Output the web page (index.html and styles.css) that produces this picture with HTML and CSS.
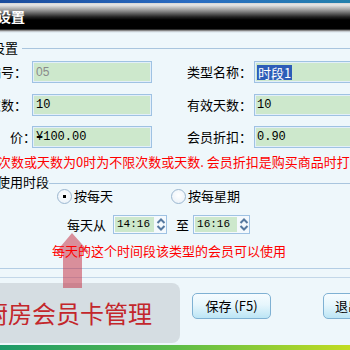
FILE: index.html
```html
<!DOCTYPE html>
<html lang="zh">
<head>
<meta charset="utf-8">
<title>类型设置</title>
<link rel="stylesheet" href="styles.css">
</head>
<body>
<div class="titlebar"><span class="title">类型设置</span></div>

<div class="legend l1"><span class="legend-text">类型设置</span><span class="legend-line"></span></div>

<div class="form">
  <div class="row">
    <div class="lab-l"><span>会员卡编号：</span></div>
    <div class="inp inp-l disabled">05</div>
    <div class="lab-r">类型名称：</div>
    <div class="inp inp-r"><span class="sel">时段1</span></div>
  </div>
  <div class="row">
    <div class="lab-l"><span>可用次数：</span></div>
    <div class="inp inp-l">10</div>
    <div class="lab-r">有效天数：</div>
    <div class="inp inp-r">10</div>
  </div>
  <div class="row">
    <div class="lab-l wide"><span>售　　价：</span></div>
    <div class="inp inp-l pull">¥100.00</div>
    <div class="lab-r">会员折扣：</div>
    <div class="inp inp-r">0.90</div>
  </div>
</div>

<p class="note">次数或天数为0时为不限次数或天数. 会员折扣是购买商品时打折的折扣</p>

<div class="legend l2"><span class="legend-text">使用时段</span><span class="legend-line"></span></div>

<div class="radios">
  <div class="radio"><span class="circle"><span class="dot"></span></span><span>按每天</span></div>
  <div class="radio second"><span class="circle"></span><span>按每星期</span></div>
</div>

<div class="times">
  <span>每天从</span>
  <div class="tbox first">
    <div class="tval">14:16</div>
    <div class="spin"><svg width="10" height="15" viewBox="0 0 10 15"><path d="M1.5 6 L5 2.5 L8.5 6 M1.5 9 L5 12.5 L8.5 9" fill="none" stroke="#56799f" stroke-width="2"/></svg></div>
  </div>
  <span class="to">至</span>
  <div class="tbox second">
    <div class="tval">16:16</div>
    <div class="spin"><svg width="10" height="15" viewBox="0 0 10 15"><path d="M1.5 6 L5 2.5 L8.5 6 M1.5 9 L5 12.5 L8.5 9" fill="none" stroke="#56799f" stroke-width="2"/></svg></div>
  </div>
</div>

<p class="anno">每天的这个时间段该类型的会员可以使用</p>

<div class="sep"></div>
<div class="sep2"></div>

<div class="bottom">
  <div class="wm"><span>厨房会员卡管理</span></div>
  <button class="btn save">保存 (F5)</button>
  <button class="btn exit">退出</button>
</div>
<div class="strip"></div>

<svg class="arrow" width="34" height="57" viewBox="0 0 34 57"><polygon points="16,1 0,20 7,20 7,56 26,56 26,20 33,20" fill="rgba(196,40,60,0.5)"/></svg>
</body>
</html>
```

FILE: styles.css
```css
* { box-sizing: border-box; }
html, body { margin: 0; padding: 0; }
body {
  width: 350px;
  height: 350px;
  overflow: hidden;
  position: relative;
  background: #eef7fb;
  color: #000;
  font: 13px/16px "Noto Sans CJK SC", "Liberation Sans", sans-serif;
}

.titlebar {
  height: 33px;
  padding-top: 8px;
  display: flex;
  align-items: flex-start;
  background:
    linear-gradient(to right, #1b4c9c, #2a6cc2 55%, #2380ac) top left / 100% 3px no-repeat,
    linear-gradient(to bottom, #d6d6d6 3px, #e6e6e6 5px, #8c8c8c 11px, #222 17px, #000 20px, #000 29px, #5a5a5a 30px, #b4b4b4 31px, #d8e2ea 32px, #eef7fb 33px);
}
.title {
  margin-left: -31px;
  color: #fff;
  font-weight: bold;
  font-size: 14px;
  line-height: 16px;
  white-space: nowrap;
}

.legend { display: flex; height: 14px; margin-top: 8px; }
.legend-text { white-space: nowrap; line-height: 14px; flex: none; }
.l1 .legend-text { margin-left: -34px; }
.legend-line { flex: 1; height: 1px; background: #a9c5de; margin-top: 7px; margin-left: 4px; }
.l2 { margin-top: 5px; }
.l2 .legend-text { margin-left: -3px; }
.l2 .legend-line { margin-top: 8px; margin-left: 0; }

.form { margin-top: 6px; display: flex; flex-direction: column; gap: 10.5px; }
.row { display: flex; align-items: center; height: 22px; }
.lab-l {
  width: 32px;
  flex: none;
  display: flex;
  justify-content: flex-end;
  overflow: hidden;
  padding-right: 5px;
  white-space: nowrap;
}
.lab-l span { flex: none; }
.lab-l.wide { width: 36px; padding-right: 0; }
.inp {
  height: 22px;
  flex: none;
  border: 1px solid #9fc2e3;
  box-shadow: inset 0 0 0 1px #e2eff9;
  background: #cde8cc;
  padding: 0 3px;
  display: flex;
  align-items: center;
  font: 12px/16px "Liberation Mono", monospace;
  white-space: nowrap;
  overflow: hidden;
}
.inp-l { width: 120px; }
.inp-l.pull { margin-left: -4px; }
.disabled { color: #8a8a8a; font-family: "Liberation Sans", sans-serif; }
.lab-r { margin-left: 35px; width: 67px; flex: none; white-space: nowrap; }
.inp-r { width: 120px; padding-left: 2px; }
.sel {
  background: #2d5db8;
  color: #fff;
  font: 13px/15px "Noto Sans CJK SC", sans-serif;
  padding: 0 1px;
}

.note { margin: 6px 0 0 -2px; color: #f00; white-space: nowrap; line-height: 16px; }

.radios { display: flex; align-items: center; height: 16px; margin-top: -1px; padding-left: 57px; }
.radio { display: flex; align-items: center; gap: 2px; }
.radio.second { margin-left: 58px; }
.circle {
  width: 15px;
  height: 15px;
  border-radius: 50%;
  border: 1px solid #9cb7d0;
  background: radial-gradient(circle at 50% 40%, #fff, #e6eff7);
  display: flex;
  align-items: center;
  justify-content: center;
}
.dot { width: 3px; height: 3px; background: #000; }

.times { display: flex; align-items: center; height: 19px; margin-top: 11px; padding-left: 67px; }
.tbox {
  width: 54px;
  height: 19px;
  border: 1px solid #9fc2e3;
  background: #f4f9fd;
  display: flex;
  margin-left: 7px;
}
.tbox.second { width: 57px; margin-left: 4px; }
.to { margin-left: 9px; }
.tval {
  width: 39px;
  margin: 1px;
  background: #cde8cc;
  padding-left: 2px;
  display: flex;
  align-items: center;
  font: 11px/15px "Liberation Mono", monospace;
}
.tbox.second .tval { width: 42px; }
.spin { flex: 1; display: flex; align-items: center; justify-content: center; }

.anno { margin: 9px 0 0 52px; color: #f00; white-space: nowrap; position: relative; z-index: 2; }

.sep { height: 1px; background: #b3cde4; margin-top: 9px; }
.sep2 { height: 1px; background: #c3d7e8; margin-top: 8px; }

.bottom { display: flex; align-items: flex-start; height: 67px; }
.wm {
  flex: none;
  margin-left: -20px;
  margin-top: 5px;
  width: 200px;
  height: 60px;
  background: #d5dde2;
  border-radius: 8px;
  display: flex;
  align-items: center;
  padding-left: 4px;
  overflow: hidden;
}
.wm span { font-size: 24px; line-height: 28px; color: #c3262b; white-space: nowrap; }
.btn {
  flex: none;
  margin-top: 15px;
  width: 79px;
  height: 26px;
  padding: 0;
  border: 1px solid #7fb1d3;
  border-radius: 5px;
  background: linear-gradient(#f6fcff, #e6f6fc 45%, #bce5f5);
  color: #000;
  font: 13px/16px "Noto Sans CJK SC", sans-serif;
}
.save { margin-left: 12px; }
.exit { margin-left: 52px; text-align: left; padding-left: 11px; }

.strip { height: 5px; background: linear-gradient(to right, #1c9a6a, #5cbc48 50%, #c2dc22); }

.arrow { position: absolute; left: 56px; top: 232px; z-index: 1; }
```
